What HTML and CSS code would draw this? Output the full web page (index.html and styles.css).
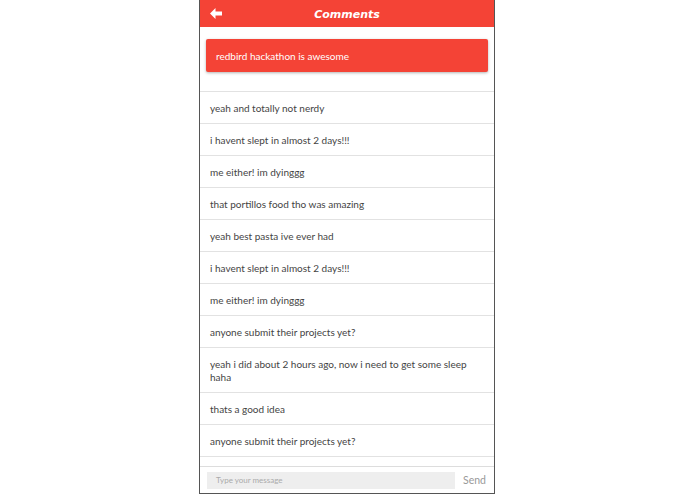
FILE: index.html
```html
<!DOCTYPE html>
<html>
<head>
<meta charset="utf-8">
<link rel="stylesheet" href="styles.css">
</head>
<body>
<div class="phone">
  <header class="topbar">
    <svg class="back" width="12" height="11" viewBox="0 0 12 11"><path d="M0 5.5 L5.5 0 L5.5 3.5 L12 3.5 L12 7.5 L5.5 7.5 L5.5 11 Z" fill="#fff"/></svg>
    <span class="title">Comments</span>
  </header>
  <div class="post-wrap">
    <div class="post">redbird hackathon is awesome</div>
  </div>
  <ul class="comments">
    <li>yeah and totally not nerdy</li>
    <li>i havent slept in almost 2 days!!!</li>
    <li>me either! im dyinggg</li>
    <li>that portillos food tho was amazing</li>
    <li>yeah best pasta ive ever had</li>
    <li>i havent slept in almost 2 days!!!</li>
    <li>me either! im dyinggg</li>
    <li>anyone submit their projects yet?</li>
    <li>yeah i did about 2 hours ago, now i need to get some sleep haha</li>
    <li>thats a good idea</li>
    <li>anyone submit their projects yet?</li>
    <li>&nbsp;</li>
  </ul>
  <footer class="composer">
    <div class="input">Type your message</div>
    <span class="send">Send</span>
  </footer>
</div>
</body>
</html>
```

FILE: styles.css
```css
* { box-sizing: border-box; }
html, body { margin: 0; padding: 0; background: #fff; }
body { font-family: "Lato", "Open Sans", sans-serif; }
.phone {
  width: 296px;
  height: 494px;
  margin-left: 199px;
  border-left: 1px solid #555;
  border-right: 1px solid #555;
  border-bottom: 1px solid #555;
  display: flex;
  flex-direction: column;
  overflow: hidden;
  position: relative;
}
.topbar {
  height: 27px;
  background: #f44336;
  display: flex;
  align-items: center;
  justify-content: center;
  position: relative;
  flex: none;
}
.back { position: absolute; left: 10px; top: 8px; }
.title {
  color: #fff;
  font-family: "DejaVu Sans", sans-serif;
  font-style: italic;
  font-weight: bold;
  font-size: 11px;
  margin-top: 2px;
}
.post-wrap { padding: 12px 6px 19px; flex: none; }
.post {
  height: 33px;
  background: #f44336;
  color: #fff;
  font-size: 10px;
  padding-left: 10px;
  padding-top: 1px;
  display: flex;
  align-items: center;
  border-radius: 2px;
  box-shadow: 0 1px 3px rgba(0,0,0,0.3);
}
.comments {
  list-style: none;
  margin: 0;
  padding: 0;
  flex: 1;
  overflow: hidden;
  border-top: 1px solid #e2e2e2;
}
.comments li {
  padding: 10px 10px 8px;
  min-height: 32px;
  font-size: 10px;
  line-height: 13px;
  color: #444;
  border-bottom: 1px solid #e2e2e2;
}
.composer {
  flex: none;
  height: 27px;
  border-top: 1px solid #ddd;
  display: flex;
  align-items: center;
  padding: 0 8px 0 7px;
  gap: 8px;
}
.input {
  width: 248px;
  height: 17px;
  background: #eee;
  font-size: 8px;
  color: #aaa;
  padding-left: 9px;
  display: flex;
  align-items: center;
}
.send { font-size: 10.5px; color: #999; }
```
